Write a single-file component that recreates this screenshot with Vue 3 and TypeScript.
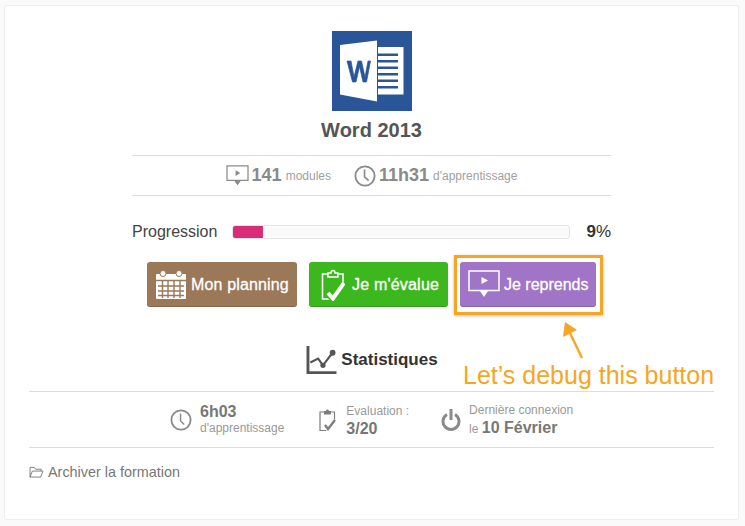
<script setup lang="ts">
const bars: number[] = [0, 1, 2, 3, 4, 5]
</script>

<template>
  <div class="page">
    <main class="card">
      <section class="top">
        <svg class="logo" viewBox="0 0 80 80" width="80" height="80">
          <rect width="80" height="80" fill="#2a5699" />
          <path d="M8 14 45 9.500V70.500L8 63.500Z" fill="#fff" />
          <path d="M46 16H71.500V63.500H46Z" fill="#fff" />
          <rect v-for="b in bars" :key="b" x="46" :y="22.500 + b * 6.500" width="20" height="2.500" fill="#2a5699" />
          <path d="M15 30H19L22 46 26 30H29.500L33 46 36 30H38.500L34.500 51H31L27.500 35.500 24 51H20.500Z" fill="#2a5699" stroke="#2a5699" stroke-width=".7" />
        </svg>
        <h1 class="title">Word 2013</h1>
        <div class="summary">
          <svg class="sum-ico" viewBox="0 0 24 22" width="23" height="21">
            <path d="M1 1H23V16H1Z M9 16 12 20 15 16" fill="none" stroke="#8a8a8a" stroke-width="1.300" />
            <path d="M9.500 16H14.500L12 20Z M10 5.500 15 8.500 10 11.500Z" fill="#8a8a8a" />
          </svg>
          <b class="num">141</b><span class="lab">modules</span>
          <svg class="sum-ico clock-a" viewBox="0 0 24 24" width="22" height="22">
            <circle cx="12" cy="12" r="10.500" fill="none" stroke="#8a8a8a" stroke-width="2" />
            <path d="M11.500 5V13L16 17" fill="none" stroke="#8a8a8a" stroke-width="1.800" />
          </svg>
          <b class="num">11h31</b><span class="lab">d'apprentissage</span>
        </div>
        <div class="progress">
          <span class="prog-label">Progression</span>
          <div class="track"><div class="fill" :style="{ width: '9%' }"></div></div>
          <span class="pct"><b>9</b>%</span>
        </div>
        <div class="actions">
          <button class="btn brown">
            <svg viewBox="0 0 32 31" width="32" height="31">
              <path d="M2 5H30A1 1 0 0 1 31 6V29A1 1 0 0 1 30 30H2A1 1 0 0 1 1 29V6A1 1 0 0 1 2 5Z" fill="#fff" />
              <circle cx="8" cy="4.500" r="3" fill="#fff" stroke="#9a7858" stroke-width="1" />
              <circle cx="24" cy="4.500" r="3" fill="#fff" stroke="#9a7858" stroke-width="1" />
              <path d="M1 11.500H31M3 17H29M3 22H29M3 26.500H29M7.500 12V29M13 12V29M19 12V29M25 12V29" stroke="#9a7858" stroke-width="1.400" fill="none" />
            </svg>
            <span class="shift-a">Mon planning</span>
          </button>
          <button class="btn green">
            <svg viewBox="0 0 24 33" width="24" height="33">
              <path d="M7 6H1.500V31H9M17 6H22V17" fill="none" stroke="#fff" stroke-width="1.500" />
              <path d="M7 9V5H10C10 1.500 14 1.500 14 5H17V9Z" fill="none" stroke="#fff" stroke-width="1.500" />
              <path d="M7 25 12 30.500 23 15" fill="none" stroke="#3cb81e" stroke-width="7" />
              <path d="M7 25 12 30.500 23 15" fill="none" stroke="#fff" stroke-width="4" />
            </svg>
            <span class="shift-b">Je m'évalue</span>
          </button>
          <div class="focus-box">
            <button class="btn purple">
              <svg viewBox="0 0 32 30" width="32" height="30">
                <path d="M1 1H31V20.500H1Z" fill="none" stroke="#fff" stroke-width="1.500" />
                <path d="M12 21H20L16 27Z M13.500 7 20 10.500 13.500 14Z" fill="#fff" />
              </svg>
              <span class="shift-c">Je reprends</span>
            </button>
          </div>
        </div>
      </section>

      <section class="stats">
        <h2 class="stats-title">
          <svg viewBox="0 0 33 30" width="33" height="29">
            <path d="M2.500 0V27.500H32" fill="none" stroke="#555" stroke-width="3" />
            <path d="M5 17 13 13 18 20 28 7" fill="none" stroke="#555" stroke-width="2.200" />
            <circle cx="18" cy="20" r="2.700" fill="#555" />
            <circle cx="28" cy="7" r="3" fill="#555" />
          </svg>
          <span>Statistiques</span>
        </h2>
        <div class="stat-row">
          <div class="stat one">
            <svg viewBox="0 0 24 24" width="22" height="22">
              <circle cx="12" cy="12" r="10.500" fill="none" stroke="#8a8a8a" stroke-width="2" />
              <path d="M11.500 5V13L15.500 17" fill="none" stroke="#8a8a8a" stroke-width="1.600" />
            </svg>
            <div class="stat-text">
              <b class="big">6h03</b>
              <span class="small">d'apprentissage</span>
            </div>
          </div>
          <div class="stat two">
            <svg viewBox="0 0 17 24" width="17" height="24">
              <path d="M5 4H1V22.500H8M12 4H15.500V13" fill="none" stroke="#7d7d7d" stroke-width="1.200" />
              <path d="M5 6.500V3H7C7 1 10 1 10 3H12V6.500Z" fill="#7d7d7d" />
              <path d="M6 17 9 21 16 12" fill="none" stroke="#fff" stroke-width="4.500" />
              <path d="M6 17 9 21 16 12" fill="none" stroke="#7d7d7d" stroke-width="2.300" />
            </svg>
            <div class="stat-text">
              <span class="small">Evaluation :</span>
              <b class="big">3/20</b>
            </div>
          </div>
          <div class="stat three">
            <svg viewBox="0 0 20 24" width="20" height="24">
              <path d="M6 6.500A8 8 0 1 0 14 6.500" fill="none" stroke="#8a8a8a" stroke-width="3" />
              <path d="M10 1V12" fill="none" stroke="#8a8a8a" stroke-width="3" />
            </svg>
            <div class="stat-text">
              <span class="small">Dernière connexion</span>
              <span class="small">le <b class="big">10 Février</b></span>
            </div>
          </div>
        </div>
        <a class="archive">
          <svg viewBox="0 0 16 13" width="15" height="12">
            <path d="M1 12V1.500H5.500L7 3.500H13V5.500M1 12H12.500L15 5.500H3.500L1 12" fill="none" stroke="#777" stroke-width="1" />
          </svg>
          <span>Archiver la formation</span>
        </a>
      </section>
    </main>

    <div class="note">
      <svg class="arrow" viewBox="0 0 24 40" width="24" height="40">
        <path d="M5 2 3 17 17 10Z" fill="#f6a623" />
        <path d="M9 11 22 38" stroke="#f6a623" stroke-width="2.400" fill="none" />
      </svg>
      <span class="note-text">Let’s debug this button</span>
    </div>
  </div>
</template>

<style>
html, body { margin: 0; background: #fafafa; }
</style>

<style scoped>
.page {
  position: relative;
  width: 745px;
  height: 526px;
  overflow: hidden;
  box-sizing: border-box;
  padding: 5px 0 0 4px;
  font-family: "Liberation Sans", Arial, sans-serif;
}
.card {
  box-sizing: border-box;
  width: 735px;
  height: 515px;
  background: #fff;
  border: 1px solid #eee;
  border-radius: 2px;
  padding: 25px 24px 0;
}
.top { width: 479px; margin: 0 auto; display: flex; flex-direction: column; align-items: center; }
.logo { display: block; }
.title { margin: 8px 0 13px; font-size: 20px; line-height: 23px; font-weight: 700; color: #555; }
.summary {
  box-sizing: border-box;
  width: 100%;
  height: 41px;
  border-top: 1px solid #ddd;
  border-bottom: 1px solid #ddd;
  display: flex;
  align-items: center;
  justify-content: center;
  color: #999;
}
.sum-ico { flex: none; margin-right: 3px; }
.clock-a { margin-left: 23px; margin-right: 3px; }
.num { font-size: 18px; color: #8a8a8a; }
.lab { font-size: 12px; margin-left: 4px; color: #a0a0a0; }
.progress { width: 100%; display: flex; align-items: center; margin-top: 27px; height: 18px; }
.prog-label { width: 100px; flex: none; font-size: 16px; color: #444; }
.track {
  flex: none;
  box-sizing: border-box;
  width: 338px;
  height: 14px;
  background: #fafafa;
  border: 1px solid #e5e5e5;
  border-radius: 3px;
  overflow: hidden;
}
.fill { height: 100%; background: #d92d77; }
.pct { margin-left: auto; font-size: 17px; color: #333; }
.actions { width: 100%; display: flex; align-items: flex-start; margin-top: 21px; padding-left: 15px; box-sizing: border-box; }
.btn {
  box-sizing: border-box;
  height: 45px;
  border: 0;
  border-radius: 3px;
  color: #fff;
  font-family: inherit;
  font-size: 16px;
  font-weight: 400;
  display: flex;
  align-items: center;
  padding: 0 0 0 8px;
  box-shadow: inset 0 -1px 0 rgba(0, 0, 0, .15);
  -webkit-text-stroke: .3px #fff;
}
.btn svg { flex: none; }
.brown { width: 150px; background: #9a7858; }
.green { width: 139px; margin-left: 12px; background: #3cb81e; padding-left: 12px; }
.purple { width: 136px; background: #a074c6; padding-left: 8px; }
.shift-a { margin-left: 4px; letter-spacing: .15px; }
.shift-b { margin-left: 7px; letter-spacing: .2px; }
.shift-c { margin-left: 4px; }
.focus-box {
  box-sizing: border-box;
  width: 149px;
  height: 60px;
  margin: -7px 0 0 6px;
  border: 3px solid #f6a623;
  padding: 4px 0 0 3px;
  box-shadow: 0 1px 3px rgba(0, 0, 0, .25);
}
.stats { margin-top: 30px; }
.stats-title {
  margin: 0;
  height: 30px;
  display: flex;
  align-items: center;
  justify-content: center;
  gap: 3px;
  font-size: 17px;
  font-weight: 700;
  color: #333;
}
.stat-row {
  box-sizing: border-box;
  margin-top: 16px;
  height: 57px;
  border-top: 1px solid #ddd;
  border-bottom: 1px solid #ddd;
  display: flex;
  align-items: center;
  justify-content: flex-start;
  padding-left: 141px;
}
.stat { display: flex; align-items: center; }
.stat-text { display: flex; flex-direction: column; margin-left: 8px; }
.one .stat-text { margin-left: 8px; line-height: 16px; }
.two { margin-left: 35px; }
.two .stat-text { margin-left: 10px; line-height: 18px; }
.three { margin-left: 32px; }
.three .stat-text { margin-left: 8px; line-height: 18px; }
.big { font-size: 16px; font-weight: 700; color: #777; }
.small { font-size: 12px; color: #999; }
.archive {
  display: flex;
  align-items: center;
  gap: 4px;
  margin-top: 16px;
  font-size: 14.400px;
  color: #777;
}
.note { position: absolute; left: 463px; top: 320px; width: 270px; height: 72px; }
.arrow { position: absolute; left: 97px; top: 0; }
.note-text {
  position: absolute;
  left: 0;
  top: 41px;
  font-size: 25px;
  line-height: 28px;
  color: #f6a623;
  white-space: nowrap;
}
</style>
